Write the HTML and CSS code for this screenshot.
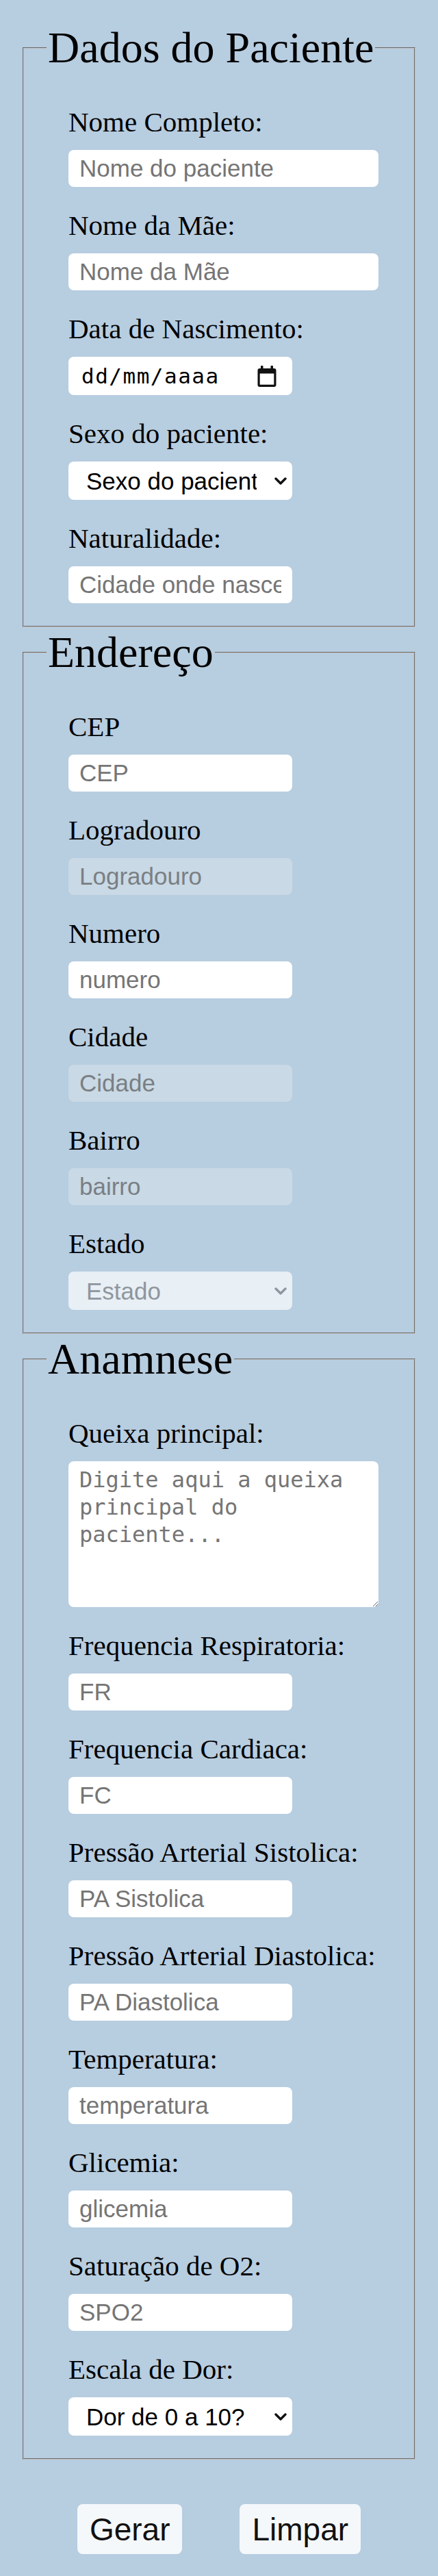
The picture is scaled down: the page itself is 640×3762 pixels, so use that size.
FILE: index.html
```html
<!DOCTYPE html>
<html lang="pt-BR">
<head>
<meta charset="utf-8">
<title>Ficha do Paciente</title>
<link rel="stylesheet" href="styles.css">
</head>
<body>
<form class="page">
  <fieldset class="group">
    <legend class="group-title">Dados do Paciente</legend>
    <div class="field">
      <label class="label" for="nome">Nome Completo:</label>
      <input class="control wide" id="nome" type="text" placeholder="Nome do paciente">
    </div>
    <div class="field">
      <label class="label" for="mae">Nome da Mãe:</label>
      <input class="control wide" id="mae" type="text" placeholder="Nome da Mãe">
    </div>
    <div class="field">
      <label class="label">Data de Nascimento:</label>
      <div class="control date-control">
        <span class="date-text">dd/mm/aaaa</span>
        <svg class="cal-icon" viewBox="0 0 28 31" width="28" height="31" aria-hidden="true">
          <rect x="5" y="0" width="3.5" height="6" rx="1" fill="#111"/>
          <rect x="19.5" y="0" width="3.5" height="6" rx="1" fill="#111"/>
          <path d="M3.5 4h21a3 3 0 0 1 3 3v21a3 3 0 0 1-3 3h-21a3 3 0 0 1-3-3V7a3 3 0 0 1 3-3zM3.7 11.5v16.3h20.6V11.5z" fill="#111" fill-rule="evenodd"/>
        </svg>
      </div>
    </div>
    <div class="field">
      <label class="label" for="sexo">Sexo do paciente:</label>
      <div class="select-wrap">
        <select class="control select" id="sexo">
          <option>Sexo do paciente</option>
          <option>Masculino</option>
          <option>Feminino</option>
        </select>
        <svg class="chevron" viewBox="0 0 18 11" width="18" height="11" aria-hidden="true"><path d="M2 2l7 7 7-7" fill="none" stroke="#111" stroke-width="3.4" stroke-linecap="round" stroke-linejoin="round"/></svg>
      </div>
    </div>
    <div class="field">
      <label class="label" for="nat">Naturalidade:</label>
      <input class="control" id="nat" type="text" placeholder="Cidade onde nasceu">
    </div>
  </fieldset>

  <fieldset class="group">
    <legend class="group-title">Endereço</legend>
    <div class="field">
      <label class="label" for="cep">CEP</label>
      <input class="control" id="cep" type="text" placeholder="CEP">
    </div>
    <div class="field">
      <label class="label" for="log">Logradouro</label>
      <input class="control locked" id="log" type="text" placeholder="Logradouro" disabled>
    </div>
    <div class="field">
      <label class="label" for="num">Numero</label>
      <input class="control" id="num" type="text" placeholder="numero">
    </div>
    <div class="field">
      <label class="label" for="cid">Cidade</label>
      <input class="control locked" id="cid" type="text" placeholder="Cidade" disabled>
    </div>
    <div class="field">
      <label class="label" for="bai">Bairro</label>
      <input class="control locked" id="bai" type="text" placeholder="bairro" disabled>
    </div>
    <div class="field">
      <label class="label" for="uf">Estado</label>
      <div class="select-wrap">
        <select class="control select select-locked" id="uf" disabled>
          <option>Estado</option>
        </select>
        <svg class="chevron" viewBox="0 0 18 11" width="18" height="11" aria-hidden="true"><path d="M2 2l7 7 7-7" fill="none" stroke="#8f969d" stroke-width="3.4" stroke-linecap="round" stroke-linejoin="round"/></svg>
      </div>
    </div>
  </fieldset>

  <fieldset class="group">
    <legend class="group-title">Anamnese</legend>
    <div class="field">
      <label class="label" for="queixa">Queixa principal:</label>
      <textarea class="control wide area" id="queixa" placeholder="Digite aqui a queixa principal do paciente..."></textarea>
    </div>
    <div class="field">
      <label class="label" for="fr">Frequencia Respiratoria:</label>
      <input class="control" id="fr" type="text" placeholder="FR">
    </div>
    <div class="field">
      <label class="label" for="fc">Frequencia Cardiaca:</label>
      <input class="control" id="fc" type="text" placeholder="FC">
    </div>
    <div class="field">
      <label class="label" for="pas">Pressão Arterial Sistolica:</label>
      <input class="control" id="pas" type="text" placeholder="PA Sistolica">
    </div>
    <div class="field">
      <label class="label" for="pad">Pressão Arterial Diastolica:</label>
      <input class="control" id="pad" type="text" placeholder="PA Diastolica">
    </div>
    <div class="field">
      <label class="label" for="temp">Temperatura:</label>
      <input class="control" id="temp" type="text" placeholder="temperatura">
    </div>
    <div class="field">
      <label class="label" for="gli">Glicemia:</label>
      <input class="control" id="gli" type="text" placeholder="glicemia">
    </div>
    <div class="field">
      <label class="label" for="spo">Saturação de O2:</label>
      <input class="control" id="spo" type="text" placeholder="SPO2">
    </div>
    <div class="field">
      <label class="label" for="dor">Escala de Dor:</label>
      <div class="select-wrap">
        <select class="control select" id="dor">
          <option>Dor de 0 a 10?</option>
          <option>0</option><option>1</option><option>2</option><option>3</option>
          <option>4</option><option>5</option><option>6</option><option>7</option>
          <option>8</option><option>9</option><option>10</option>
        </select>
        <svg class="chevron" viewBox="0 0 18 11" width="18" height="11" aria-hidden="true"><path d="M2 2l7 7 7-7" fill="none" stroke="#111" stroke-width="3.4" stroke-linecap="round" stroke-linejoin="round"/></svg>
      </div>
    </div>
  </fieldset>

  <div class="actions">
    <button class="btn" type="button">Gerar</button>
    <button class="btn" type="reset">Limpar</button>
  </div>
</form>
</body>
</html>
```
FILE: styles.css
```css
html, body {
  margin: 0;
  padding: 0;
  background: #b7cde0;
}

.page {
  padding: 33px 33px 33px;
  font-family: "Liberation Serif", "Times New Roman", serif;
  color: #000;
}

.group {
  margin: 0;
  padding: 48px 33px 0 33px;
  border: 2px groove #c0c0c0;
  min-width: 0;
}

.group-title {
  font-family: "Liberation Serif", "Times New Roman", serif;
  font-size: 64px;
  padding: 0 2px;
}

.field {
  display: flex;
  flex-direction: column;
  align-items: flex-start;
  margin: 0 0 33px 32px;
}

.label {
  font-size: 41px;
  line-height: 47px;
  margin-bottom: 17px;
}

.control {
  box-sizing: border-box;
  width: 327px;
  height: 54px;
  border: none;
  border-radius: 8px;
  background: #fff;
  padding: 0 16px;
  margin: 0;
  font-family: "Liberation Sans", Arial, sans-serif;
  font-size: 35px;
  color: #000;
  outline: none;
}

.control::placeholder {
  color: #757575;
  opacity: 1;
}

.wide {
  width: 453px;
}

.locked {
  background: #c9d9e5;
}

.locked::placeholder {
  color: #7a7f84;
}

.date-control {
  height: 56px;
  display: flex;
  align-items: center;
  justify-content: space-between;
  padding: 0 23px 0 19px;
}

.date-text {
  font-family: "DejaVu Sans Mono", monospace;
  font-size: 31px;
  letter-spacing: 1.5px;
  color: #000;
}

.cal-icon {
  display: block;
}

.select-wrap {
  position: relative;
  width: 327px;
  height: 56px;
}

.select {
  display: block;
  height: 56px;
  padding: 0 52px 0 26px;
  appearance: none;
  -webkit-appearance: none;
}

.chevron {
  position: absolute;
  right: 8px;
  top: 23px;
  pointer-events: none;
}

.select-locked {
  background: #e8eff5;
  color: #8f969d;
  opacity: 1;
}

.area {
  height: 213px;
  padding: 7px 16px;
  font-family: "DejaVu Sans Mono", monospace;
  font-size: 32px;
  line-height: 40px;
  resize: vertical;
}

.actions {
  display: flex;
  justify-content: center;
  gap: 84px;
  margin-top: 65px;
}

.btn {
  height: 73px;
  padding: 0 18px;
  border: none;
  border-radius: 8px;
  background: #f4f8fb;
  font-family: "Liberation Sans", Arial, sans-serif;
  font-size: 46px;
  color: #111;
}
```
